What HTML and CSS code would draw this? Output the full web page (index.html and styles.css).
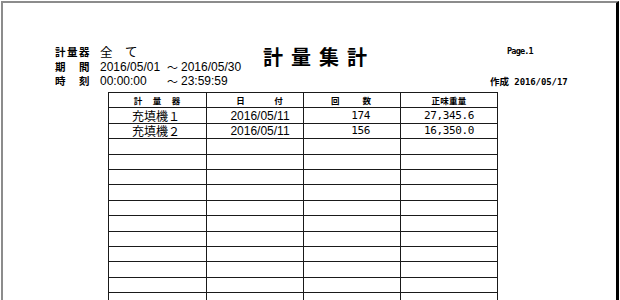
FILE: index.html
```html
<!DOCTYPE html>
<html lang="ja">
<head>
<meta charset="utf-8">
<title>計量集計</title>
<link rel="stylesheet" href="styles.css">
</head>
<body>
<div class="page">
  <div class="header">
    <div class="info">
      <div class="info-row"><span class="label">計量器</span><span class="val jp">全　て</span></div>
      <div class="info-row"><span class="label">期　間</span><span class="val v1">2016/05/01</span><span class="tilde">～</span><span class="val">2016/05/30</span></div>
      <div class="info-row"><span class="label">時　刻</span><span class="val v1">00:00:00</span><span class="tilde">～</span><span class="val">23:59:59</span></div>
    </div>
    <div class="title">計量集計</div>
    <div class="meta">
      <div class="page-no">Page.1</div>
      <div class="created"><span class="jp">作成</span> 2016/05/17</div>
    </div>
  </div>
  <table class="grid">
    <colgroup><col class="c1"><col class="c2"><col class="c3"><col class="c4"></colgroup>
    <thead>
      <tr><th class="h1">計　量　器</th><th class="h2">日　　　付</th><th class="h3">回　　数</th><th class="h4">正味重量</th></tr>
    </thead>
    <tbody>
      <tr><td class="name">充填機１</td><td class="date">2016/05/11</td><td class="count">174</td><td class="weight">27,345.6</td></tr>
      <tr><td class="name">充填機２</td><td class="date">2016/05/11</td><td class="count">156</td><td class="weight">16,350.0</td></tr>
      <tr><td></td><td></td><td></td><td></td></tr>
      <tr><td></td><td></td><td></td><td></td></tr>
      <tr><td></td><td></td><td></td><td></td></tr>
      <tr><td></td><td></td><td></td><td></td></tr>
      <tr><td></td><td></td><td></td><td></td></tr>
      <tr><td></td><td></td><td></td><td></td></tr>
      <tr><td></td><td></td><td></td><td></td></tr>
      <tr><td></td><td></td><td></td><td></td></tr>
      <tr><td></td><td></td><td></td><td></td></tr>
      <tr><td></td><td></td><td></td><td></td></tr>
      <tr><td></td><td></td><td></td><td></td></tr>
      <tr><td></td><td></td><td></td><td></td></tr>
    </tbody>
  </table>
</div>
</body>
</html>
```
FILE: styles.css
```css
html, body {
  margin: 0;
  padding: 0;
  background: #fff;
  overflow: hidden;
}
body {
  width: 620px;
  height: 300px;
  font-family: "Liberation Sans", "Noto Sans CJK JP", sans-serif;
  color: #000;
}
.page {
  margin: 1px 0 0 1px;
  width: 613px;
  height: 400px;
  border-top: 2px solid #8c8c8c;
  border-left: 2px solid #8c8c8c;
  border-right: 3px solid #000;
}
.header {
  box-sizing: border-box;
  height: 89px;
  padding: 42px 0 0 52px;
  display: flex;
  align-items: flex-start;
}
.info {
  width: 208px;
  flex: none;
}
.info-row {
  display: flex;
  align-items: center;
  height: 14.5px;
  line-height: 14px;
  font-size: 12px;
}
.label {
  width: 45px;
  flex: none;
  font-family: "Noto Sans CJK JP", sans-serif;
  font-weight: bold;
  font-size: 10.5px;
  letter-spacing: 1.5px;
}
.val {
  font-family: "Liberation Sans", "Noto Sans CJK JP", sans-serif;
  font-size: 12px;
}
.val.jp {
  font-family: "Noto Sans CJK JP", sans-serif;
  font-size: 12.5px;
}
.v1 {
  width: 67px;
  flex: none;
}
.tilde {
  width: 14px;
  flex: none;
  font-family: "Noto Sans CJK JP", sans-serif;
  font-size: 11px;
}
.title {
  flex: none;
  margin-top: 2px;
  font-family: "Noto Sans CJK JP", sans-serif;
  font-weight: bold;
  font-size: 20px;
  line-height: 20px;
  letter-spacing: 8px;
}
.meta {
  flex: none;
  margin-left: 115px;
  margin-top: 1px;
}
.page-no {
  padding-left: 17px;
  font-family: "DejaVu Sans Mono", monospace;
  font-weight: bold;
  font-size: 8.5px;
  letter-spacing: -0.8px;
  line-height: 10px;
}
.created {
  margin-top: 19px;
  font-family: "DejaVu Sans Mono", monospace;
  font-weight: bold;
  font-size: 9px;
  letter-spacing: -0.1px;
  line-height: 12px;
}
.created .jp {
  font-family: "Noto Sans CJK JP", sans-serif;
  font-weight: bold;
  font-size: 9.5px;
  letter-spacing: 0;
}
.grid {
  margin-left: 105px;
  border-collapse: collapse;
  table-layout: fixed;
  width: 390px;
}
.c1 { width: 98px; }
.c2 { width: 97px; }
.c3 { width: 97px; }
.c4 { width: 97px; }
.grid th, .grid td {
  border: 1px solid #1a1a1a;
  padding: 0;
  height: 14.4px;
  line-height: 14px;
  overflow: hidden;
  white-space: nowrap;
}
.grid th {
  font-family: "Noto Sans CJK JP", sans-serif;
  font-weight: bold;
  font-size: 8.5px;
  text-align: center;
}
.grid .h1 { letter-spacing: 1px; }
.grid .h2 { letter-spacing: 1px; padding-left: 10px; }
.grid .h3 { letter-spacing: 2px; }
.grid .h4 { letter-spacing: 0.3px; }
.grid .name {
  padding-left: 23px;
  font-family: "Noto Sans CJK JP", sans-serif;
  font-size: 12px;
}
.grid .date {
  text-align: center;
  padding-left: 10px;
  font-family: "Liberation Sans", sans-serif;
  font-size: 12px;
}
.grid .count {
  text-align: right;
  padding-right: 30px;
  font-family: "DejaVu Sans Mono", monospace;
  font-size: 11px;
  letter-spacing: -0.4px;
}
.grid .weight {
  text-align: center;
  font-family: "DejaVu Sans Mono", monospace;
  font-size: 11px;
  letter-spacing: -0.4px;
}
```
